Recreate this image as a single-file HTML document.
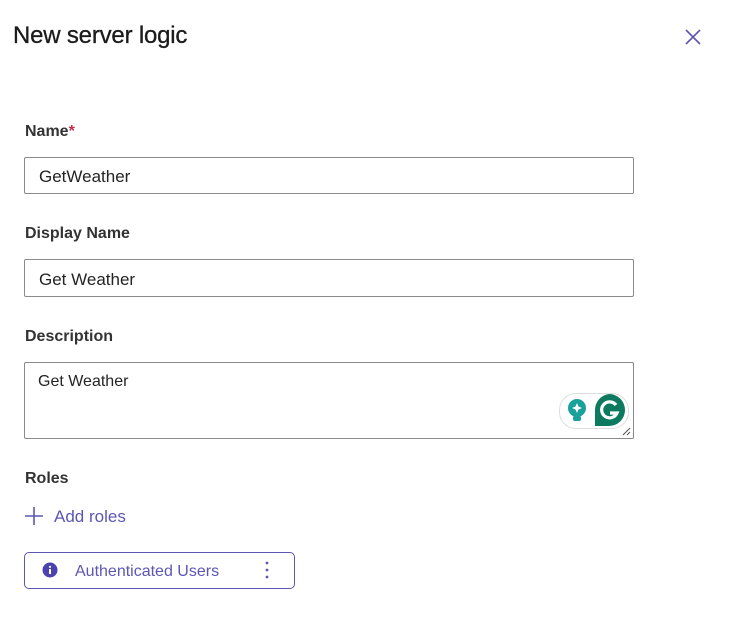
<!DOCTYPE html>
<html><head><style>
body{margin:0;width:731px;height:623px;background:#fff;font-family:"Liberation Sans",sans-serif;color:#242424;position:relative;overflow:hidden}
.a{position:absolute}
h1{position:absolute;left:13px;top:22px;margin:0;font-size:24px;font-weight:normal;letter-spacing:-0.2px;color:#1b1b1b;-webkit-text-stroke:0.3px #1b1b1b}
.lbl{position:absolute;left:25px;font-size:16px;font-weight:bold;color:#333}
.inp{position:absolute;left:24px;width:610px;border:1px solid #8a8a8a;border-radius:2px;font-size:17px;color:#242424;box-sizing:border-box}
</style></head><body>
<h1>New server logic</h1>
<svg class="a" style="left:684px;top:28px" width="18" height="18"><path d="M2 2L16 16M16 2L2 16" stroke="#5b57b3" stroke-width="1.6"/></svg>
<div class="lbl" style="top:123px">Name<span style="color:#c4314b">*</span></div>
<div class="inp" style="top:157px;height:37px;padding:9px 14px">GetWeather</div>
<div class="lbl" style="top:225px">Display Name</div>
<div class="inp" style="top:259px;height:38px;padding:10px 14px">Get Weather</div>
<div class="lbl" style="top:328px">Description</div>
<div class="inp" style="top:362px;height:77px;padding:10px 13px;font-size:16px">Get Weather</div>
<div class="a" style="left:559px;top:393px;width:68px;height:34px;border:1px solid #ddd;border-radius:17px;background:#fff"></div>
<svg class="a" style="left:566px;top:398px" width="22" height="26"><circle cx="11" cy="10" r="9" fill="#1aa19a"/><rect x="7" y="18" width="8" height="5" rx="2" fill="#1aa19a"/><path d="M11 5l1.5 3.5L16 10l-3.5 1.5L11 15l-1.5-3.5L6 10l3.5-1.5z" fill="#fff"/></svg>
<svg class="a" style="left:593px;top:394px" width="34" height="33"><path d="M16 1a16 16 0 1 1 0 32H2V17A16 16 0 0 1 16 1z" fill="#0d7a5f" transform="translate(0,-1)"/><path d="M23 11a8 8 0 1 0 1 8h-7" stroke="#fff" stroke-width="3.2" fill="none"/></svg>
<svg class="a" style="left:622px;top:427px" width="10" height="10"><path d="M1 8L8 1M5 8L8 5" stroke="#555" stroke-width="1"/></svg>
<div class="lbl" style="top:470px">Roles</div>
<svg class="a" style="left:24px;top:506px" width="20" height="20"><path d="M10 1V19M1 10H19" stroke="#5b57b3" stroke-width="1.6"/></svg>
<div class="a" style="left:54px;top:507px;font-size:17px;color:#5b57b3">Add roles</div>
<div class="a" style="left:24px;top:552px;width:269px;height:35px;border:1px solid #5b57b3;border-radius:5px"></div>
<svg class="a" style="left:42px;top:562px" width="16" height="16"><circle cx="8" cy="8" r="7.5" fill="#4b42b0"/><rect x="7" y="7" width="2" height="5" fill="#fff"/><circle cx="8" cy="4.8" r="1.1" fill="#fff"/></svg>
<div class="a" style="left:75px;top:563px;font-size:16px;color:#5b57b3">Authenticated Users</div>
<svg class="a" style="left:264px;top:560px" width="6" height="20"><circle cx="3" cy="3" r="1.4" fill="#5b57b3"/><circle cx="3" cy="10" r="1.4" fill="#5b57b3"/><circle cx="3" cy="17" r="1.4" fill="#5b57b3"/></svg>
</body></html>
